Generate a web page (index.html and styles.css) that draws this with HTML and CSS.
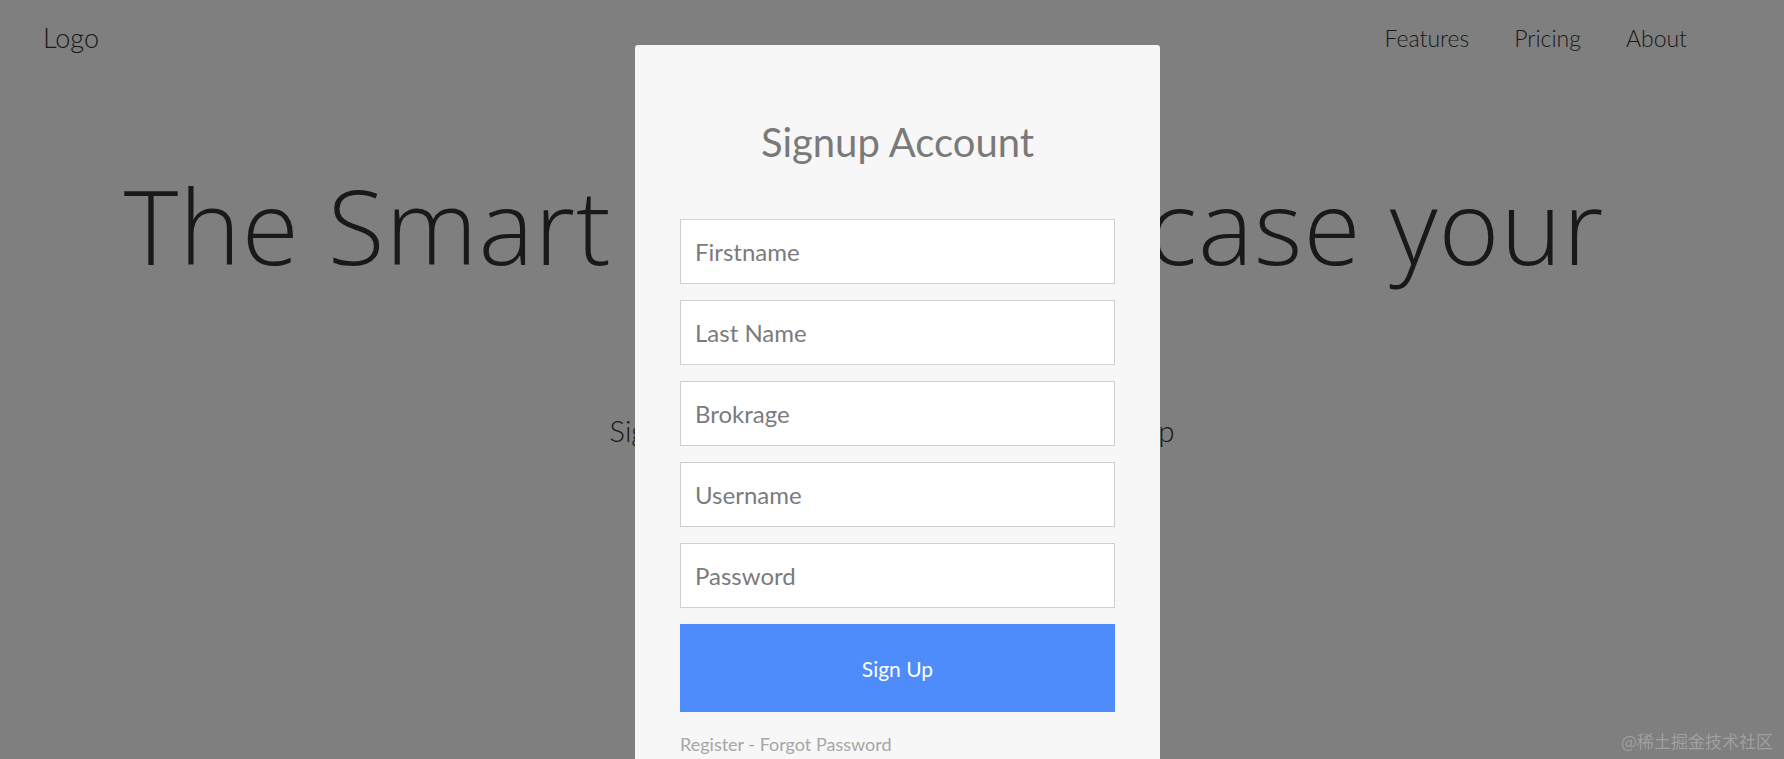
FILE: index.html
```html
<!DOCTYPE html>
<html lang="en">
<head>
  <meta charset="UTF-8" />
  <meta name="viewport" content="width=device-width, initial-scale=1.0"/>
  <title>Signup</title>
  <link rel="stylesheet" href="styles.css">
</head>
<body>
  <header class="nav">
    <div class="logo">Logo</div>
    <nav class="links">
      <a href="#">Features</a>
      <a href="#">Pricing</a>
      <a href="#">About</a>
    </nav>
  </header>

  <section class="hero">
    <h1>The Smart <span class="tight">way to show</span>case your work</h1>
    <p class="sub">Sign up to manage your brokerage in one app</p>
  </section>

  <div class="overlay">
    <div class="modal">
      <h2>Signup Account</h2>
      <form class="signup">
        <input type="text" placeholder="Firstname" />
        <input type="text" placeholder="Last Name" />
        <input type="text" placeholder="Brokrage" />
        <input type="text" placeholder="Username" />
        <input type="password" placeholder="Password" />
        <button type="button">Sign Up</button>
      </form>
      <div class="extra">Register - Forgot Password</div>
    </div>
  </div>

  <div class="watermark">@稀土掘金技术社区</div>
</body>
</html>
```

FILE: styles.css
```css
body {
  margin: 0;
  background: #fff;
  font-family: 'Lato', sans-serif;
  color: #333;
  height: 100vh;
  overflow: hidden;
}

.nav {
  height: 75px;
  display: flex;
  justify-content: space-between;
  align-items: center;
  padding: 0 97px 0 43px;
}

.logo {
  font-size: 27px;
  font-weight: 300;
}

.links {
  display: flex;
  gap: 45px;
}

.links a {
  color: #333;
  text-decoration: none;
  font-size: 23px;
  font-weight: 300;
}

.hero {
  padding-top: 90px;
}

.hero h1 {
  width: 1560px;
  margin: 0 0 0 84px;
  text-align: center;
  font-family: 'Open Sans', sans-serif;
  font-weight: 300;
  font-size: 104px;
  line-height: 1.15;
  letter-spacing: 1px;
}

/* hidden behind the modal anyway */
.hero h1 .tight {
  letter-spacing: -6px;
}

.hero .sub {
  margin: 9px 0 0 0;
  text-align: center;
  font-size: 29px;
  font-weight: 300;
}

.overlay {
  position: fixed;
  inset: 0;
  background: rgba(0, 0, 0, 0.5);
  display: flex;
  justify-content: center;
  align-items: flex-start;
  padding-top: 45px;
}

.modal {
  width: 525px;
  min-height: 800px;
  box-sizing: border-box;
  margin-left: 11px;
  padding: 0 45px;
  background: #f7f7f7;
  border-radius: 3px;
}

.modal h2 {
  margin: 0;
  padding: 73px 0 53px;
  text-align: center;
  font-size: 40px;
  font-weight: 400;
  color: #7a7a7a;
  line-height: 1.2;
}

.signup {
  display: flex;
  flex-direction: column;
  gap: 16px;
}

.signup input {
  height: 65px;
  box-sizing: border-box;
  padding: 0 14px;
  border: 1px solid #cfcfcf;
  background: #fff;
  font-family: 'Lato', sans-serif;
  font-size: 24px;
  color: #555;
  outline: none;
}

.signup input::placeholder {
  color: #7b7b7b;
}

.signup button {
  height: 88px;
  border: none;
  background: #4d8cfa;
  color: #fff;
  font-family: 'Lato', sans-serif;
  font-size: 21px;
  cursor: pointer;
}

.extra {
  margin-top: 21px;
  font-size: 18px;
  color: #a6a6a6;
}

.watermark {
  position: fixed;
  right: 11px;
  bottom: 6px;
  font-family: 'Noto Sans CJK SC', sans-serif;
  font-size: 17px;
  color: #a0a0a0;
}
```
